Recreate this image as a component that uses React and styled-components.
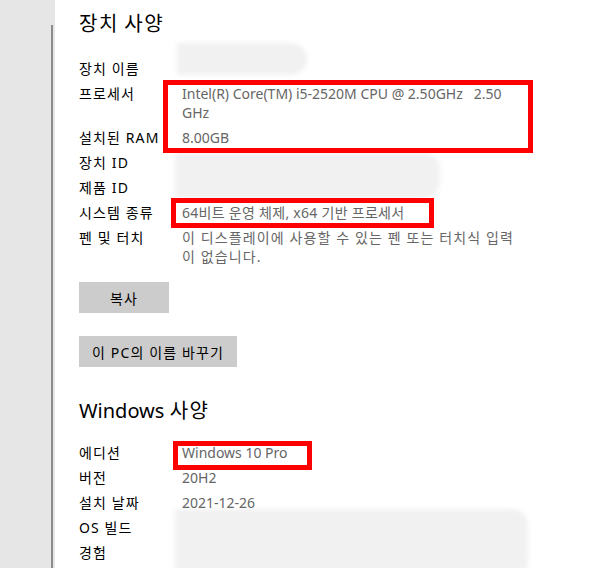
import React from "react";
import styled, { createGlobalStyle } from "styled-components";

const GlobalStyle = createGlobalStyle`
  html, body {
    margin: 0;
    padding: 0;
    background: #ffffff;
  }
  body {
    font-family: "Noto Sans", "Noto Sans CJK KR", sans-serif;
    -webkit-font-smoothing: antialiased;
  }
`;

const Shell = styled.div`
  display: flex;
  min-height: 100vh;
  overflow: hidden;
`;

const Sidebar = styled.div`
  width: 55px;
  flex-shrink: 0;
  background: #e6e6e6;
  display: flex;
  padding: 25px 2px 0 51px;
  box-sizing: border-box;
`;

const Rail = styled.div`
  width: 2px;
  background: #8c8c8c;
`;

const Content = styled.main`
  flex: 1;
  display: flex;
  flex-direction: column;
  align-items: flex-start;
  padding: 10px 0 0 24px;
`;

const Title = styled.h2`
  margin: ${(p) => p.$above}px 0 ${(p) => p.$below}px 0;
  font-size: 20px;
  line-height: 28px;
  font-weight: 400;
  color: #000;
`;

// hangul in the installed CJK face runs a bit narrower than Malgun Gothic
const Ko = styled.span`
  letter-spacing: 0.08em;
`;

const Specs = styled.div`
  display: grid;
  grid-template-columns: 103px 335px;
  row-gap: 6px;
  font-size: 14px;
  line-height: 19px;
`;

const Label = styled.div`
  grid-column: 1;
  grid-row: ${(p) => p.$row};
  color: #000;
  white-space: nowrap;
  letter-spacing: 0.08em;
`;

const Value = styled.div`
  grid-column: 2;
  grid-row: ${(p) => p.$row};
  color: #666;
  white-space: pre-wrap;
  letter-spacing: ${(p) => p.$spacing || "normal"};
  z-index: 1;
`;

const Smudge = styled.div`
  grid-column: 2;
  grid-row: ${(p) => p.$rows};
  justify-self: start;
  width: ${(p) => p.$w}px;
  margin: ${(p) => p.$m};
  background: #f1f1f1;
  border-radius: 0 16px 16px 0;
  filter: blur(2px);
`;

const Mark = styled.div`
  grid-column: 2;
  grid-row: ${(p) => p.$rows};
  justify-self: ${(p) => (p.$w ? "start" : "stretch")};
  width: ${(p) => (p.$w ? `${p.$w}px` : "auto")};
  margin: ${(p) => p.$m};
  box-sizing: border-box;
  border: 5px solid #ff0000;
  z-index: 2;
  pointer-events: none;
`;

const Button = styled.button`
  height: 31px;
  width: ${(p) => p.$w}px;
  margin-top: ${(p) => p.$top}px;
  padding: 0;
  border: none;
  background: #cccccc;
  font-family: inherit;
  font-size: 14px;
  letter-spacing: 0.08em;
  color: #000;
`;

const K = ({ children }) =>
  String(children)
    .split(/([\uAC00-\uD7A3]+)/)
    .map((part, i) =>
      /[\uAC00-\uD7A3]/.test(part) ? <Ko key={i}>{part}</Ko> : part
    );

const deviceSpecs = [
  { label: "장치 이름" },
  { label: "프로세서", value: "Intel(R) Core(TM) i5-2520M CPU @ 2.50GHz   2.50 GHz" },
  { label: "설치된 RAM", value: "8.00GB" },
  { label: "장치 ID" },
  { label: "제품 ID" },
  { label: "시스템 종류", value: "64비트 운영 체제, x64 기반 프로세서", spacing: "0.02em" },
  { label: "펜 및 터치", value: "이 디스플레이에 사용할 수 있는 펜 또는 터치식 입력이 없습니다.", spacing: "0.08em" },
];

const deviceOverlays = [
  <Smudge key="s1" $rows="1" $w={130} $m="-16px 0 3px -5px" />,
  <Smudge key="s2" $rows="4 / span 2" $w={265} $m="0 0 -1px -7px" />,
  <Mark key="m1" $rows="2 / span 2" $m="-4.5px -16px -6px -19px" />,
  <Mark key="m2" $rows="6" $w={263} $m="-5.5px 0 -5.5px -11px" />,
];

const windowsSpecs = [
  { label: "에디션", value: "Windows 10 Pro" },
  { label: "버전", value: "20H2" },
  { label: "설치 날짜", value: "2021-12-26" },
  { label: "OS 빌드" },
  { label: "경험" },
];

const windowsOverlays = [
  <Smudge key="s1" $rows="4 / span 2" $w={353} $m="-9px 0 -16px -7px" />,
  <Mark key="m1" $rows="1" $w={139} $m="-2.5px 0 -7.5px -9px" />,
];

const SpecList = ({ items, overlays }) => (
  <Specs>
    {overlays}
    {items.map((it, i) => (
      <React.Fragment key={it.label}>
        <Label $row={i + 1}>{it.label}</Label>
        <Value $row={i + 1} $spacing={it.spacing}>
          {it.value || "\u00a0"}
        </Value>
      </React.Fragment>
    ))}
  </Specs>
);

export default function App() {
  return (
    <>
      <GlobalStyle />
      <Shell>
        <Sidebar>
          <Rail />
        </Sidebar>
        <Content>
          <Title $above={0} $below={21}>
            <K>장치 사양</K>
          </Title>
          <SpecList items={deviceSpecs} overlays={deviceOverlays} />
          <Button $w={90} $top={16}>복사</Button>
          <Button $w={158} $top={23}>이 PC의 이름 바꾸기</Button>
          <Title $above={30} $below={18}>
            <K>Windows 사양</K>
          </Title>
          <SpecList items={windowsSpecs} overlays={windowsOverlays} />
        </Content>
      </Shell>
    </>
  );
}
